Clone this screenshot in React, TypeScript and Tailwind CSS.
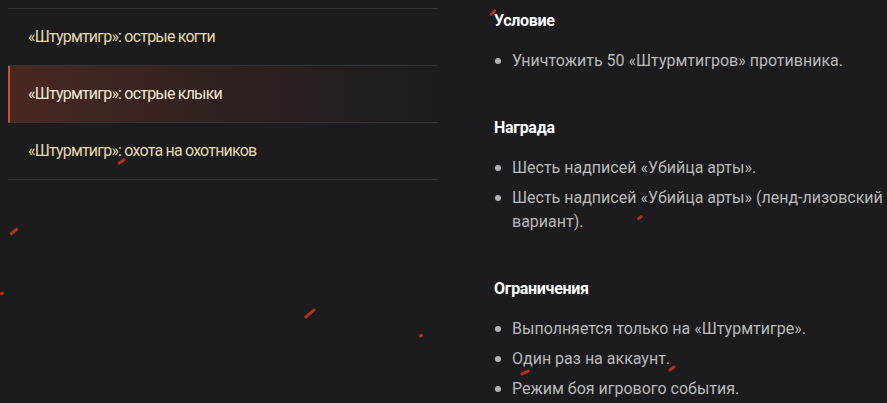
import React from 'react';

const missions = [
  { title: '«Штурмтигр»: острые когти', active: false },
  { title: '«Штурмтигр»: острые клыки', active: true },
  { title: '«Штурмтигр»: охота на охотников', active: false },
];

const sections = [
  { title: 'Условие', items: ['Уничтожить 50 «Штурмтигров» противника.'] },
  {
    title: 'Награда',
    items: ['Шесть надписей «Убийца арты».', 'Шесть надписей «Убийца арты» (ленд-лизовский вариант).'],
  },
  {
    title: 'Ограничения',
    items: ['Выполняется только на «Штурмтигре».', 'Один раз на аккаунт.', 'Режим боя игрового события.'],
  },
];

// small red sparks floating over the page
const sparks = [
  { left: 117, top: 160, w: 9, rot: -35 },
  { left: 9, top: 230, w: 10, rot: -40 },
  { left: 0, top: 292, w: 4, rot: -20 },
  { left: 303, top: 312, w: 14, rot: -40 },
  { left: 419, top: 334, w: 4, rot: -30 },
  { left: 489, top: 11, w: 8, rot: -45 },
  { left: 637, top: 216, w: 6, rot: -35 },
  { left: 520, top: 371, w: 10, rot: -25 },
  { left: 668, top: 367, w: 8, rot: -35 },
];

export default function App() {
  return (
    <div
      className="relative h-[403px] w-[887px] overflow-hidden bg-[#1c1c1e]"
      style={{ fontFamily: 'Roboto, "Noto Sans", sans-serif' }}
    >
      <div className="flex pt-2 pl-2">
        <div className="w-[430px] shrink-0 border-t border-[#343436]">
          {missions.map((m) => (
            <div
              key={m.title}
              className={
                m.active
                  ? 'flex h-[57px] items-center border-b border-[#343436] border-l-2 border-l-[#c4532e] bg-gradient-to-r from-[#4a2820] via-[#2e211f] via-50% to-[#1c1c1e] pl-[18px]'
                  : 'flex h-[57px] items-center border-b border-[#343436] pl-5'
              }
            >
              <span
                className={
                  'text-[16px] tracking-[-0.8px] ' + (m.active ? 'text-[#f1e8d6]' : 'text-[#e3d9ad]')
                }
              >
                {m.title}
              </span>
            </div>
          ))}
        </div>

        <div className="ml-[56px] flex flex-col pt-[1px]">
          {sections.map((s, i) => (
            <div key={s.title} className={i > 0 ? 'mt-[43px]' : ''}>
              <h3 className="text-[16px] leading-6 font-bold tracking-[-0.3px] text-white">{s.title}</h3>
              <ul className="mt-4 flex flex-col gap-[6px]">
                {s.items.map((it) => (
                  <li key={it} className="flex text-[16px] leading-6 text-[#b9b9b9]">
                    <span className="mt-[9px] ml-[1px] h-[6px] w-[6px] shrink-0 rounded-full bg-[#b4b4b4]" />
                    <span className="ml-[11px] w-[375px]">{it}</span>
                  </li>
                ))}
              </ul>
            </div>
          ))}
        </div>
      </div>

      {sparks.map((s, i) => (
        <div
          key={i}
          className="absolute h-[3px] rounded-full bg-[#b3321c]"
          style={{ left: s.left, top: s.top, width: s.w, transform: `rotate(${s.rot}deg)` }}
        />
      ))}
    </div>
  );
}
